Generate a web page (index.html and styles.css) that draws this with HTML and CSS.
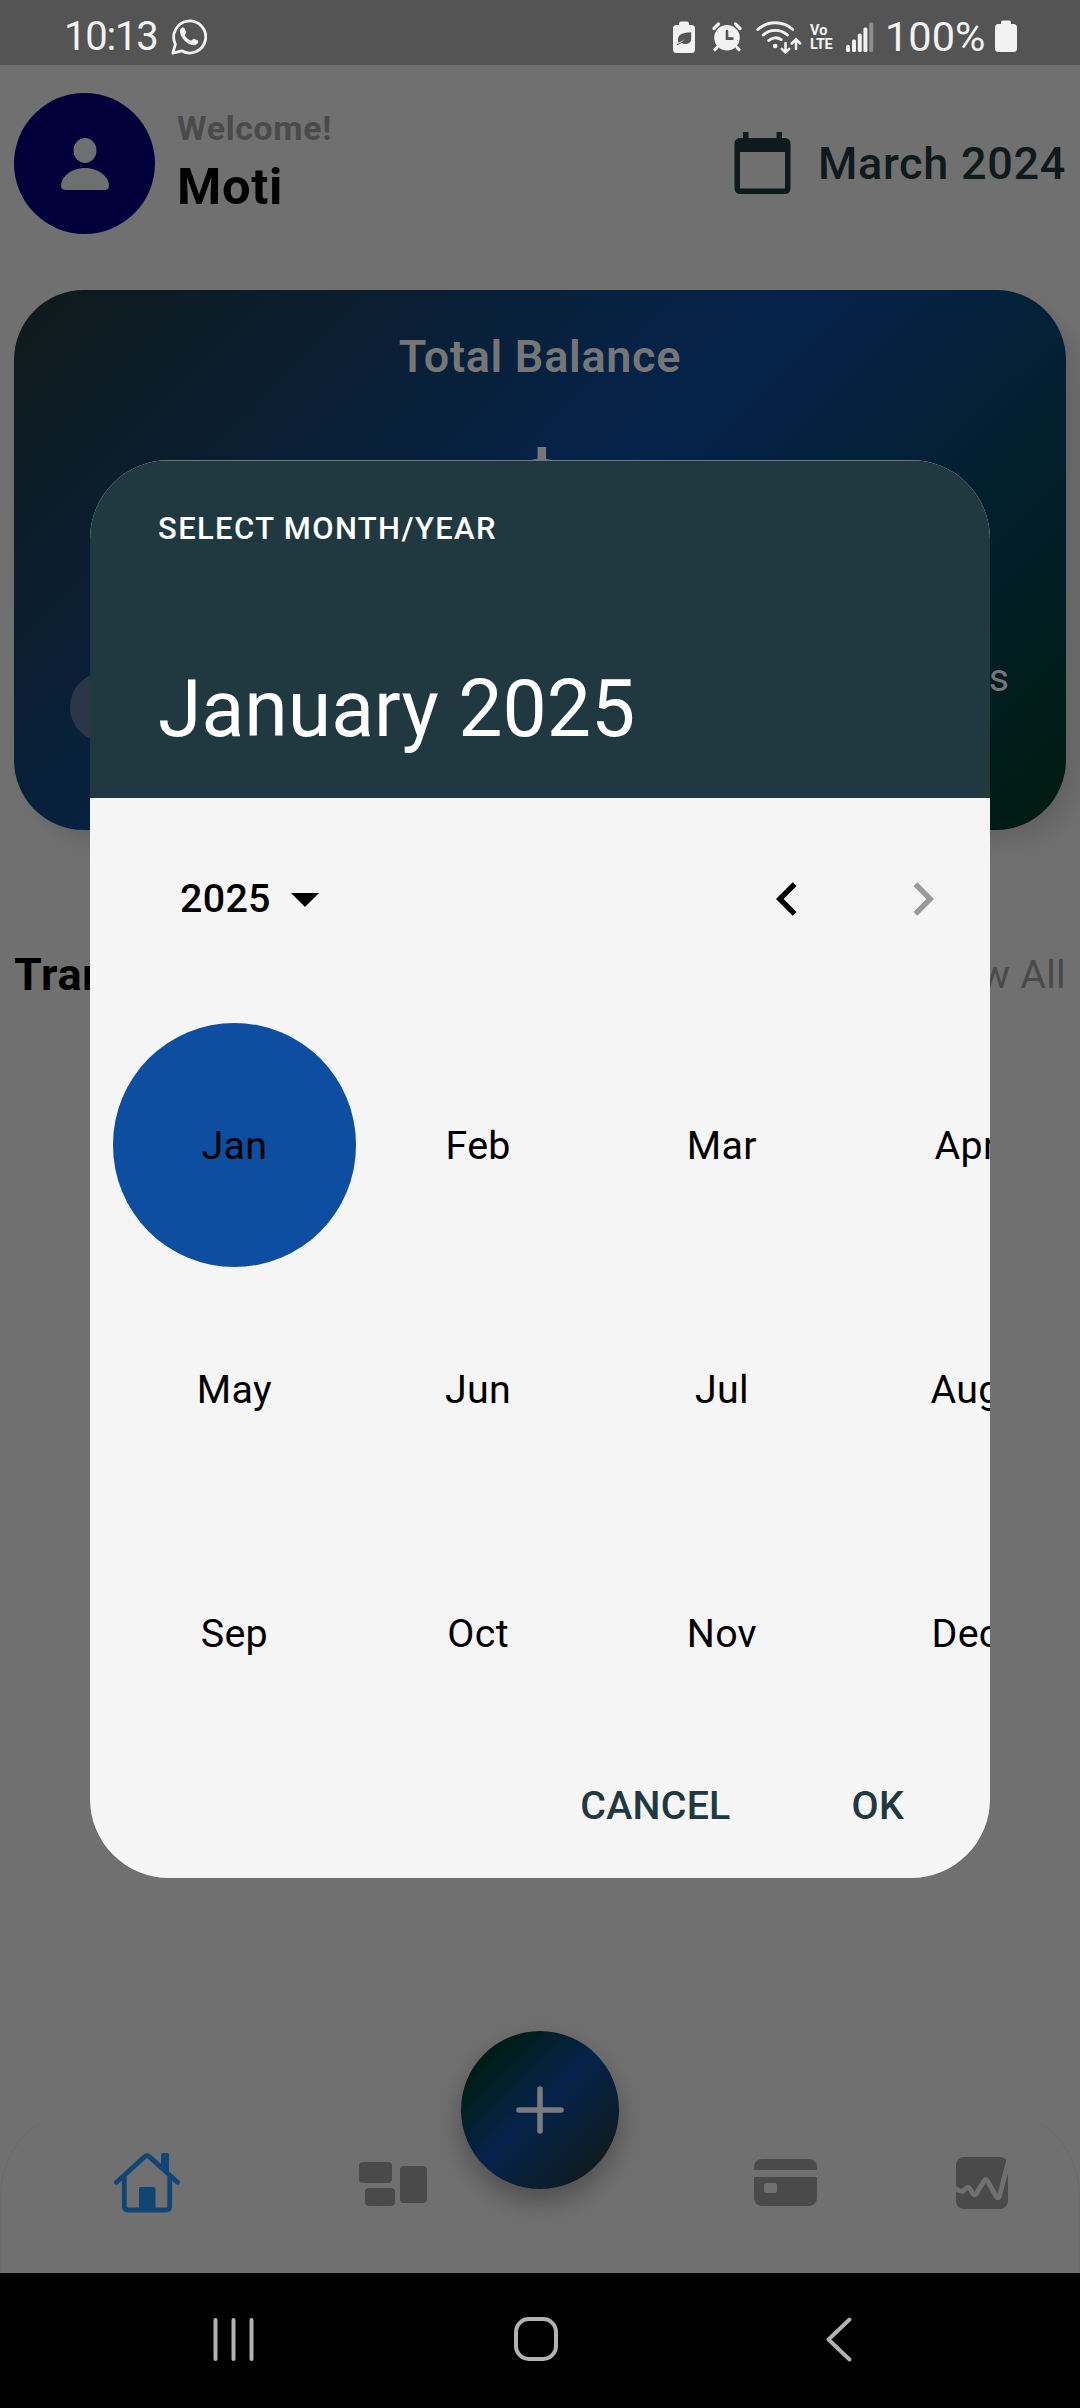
FILE: index.html
```html
<!DOCTYPE html>
<html lang="en">
<head>
<meta charset="utf-8">
<title>Select month</title>
<link rel="stylesheet" href="styles.css">
</head>
<body>
<div class="screen">
  <div class="status">
    <div class="status-left">
      <span class="clock">10:13</span>
      <svg width="36" height="37" viewBox="0 0 36 37" fill="none" stroke="#f2f2f2" stroke-width="2.8"><path d="M1.800 35.200 4.400 26.200A16 16 0 1 1 10.600 32.800Z" stroke-linejoin="round"/><path d="M9.200 11.500C10.600 9 13 9 13.600 10.400L15.200 14C15.400 15 13.600 16.400 13.800 17.200C15 19.600 17.400 21.800 19.800 22.600C20.800 22.800 22 20.600 23 20.800L26.800 22.600C28.200 23.600 26.600 27 23.400 27.200C16.400 27.600 7.800 18.600 9.200 11.500Z" fill="#f2f2f2" stroke="none"/></svg>
    </div>
    <div class="status-right">
      <svg class="i-eco" width="22" height="32" viewBox="0 0 22 32"><path d="M8 .6h6a2 2 0 0 1 2 2V4h2.500a3.500 3.500 0 0 1 3.500 3.500v21a3.500 3.500 0 0 1-3.500 3.500h-15A3.500 3.500 0 0 1 0 28.500v-21A3.500 3.500 0 0 1 3.500 4H6V2.600a2 2 0 0 1 2-2Z" fill="#f2f2f2"/><path d="M18.200 11.300V18c0 4.500-5.500 6.500-9.600 4L4 24.200v-1.200c3.600-.8 6.200-2.400 8-5.400-2.400 2.500-4.400 3.600-6.600 4.100C3.400 14.800 8 11.300 18.200 11.300Z" fill="#545454"/></svg>
      <svg class="i-alarm" width="30" height="30" viewBox="0 0 30 30"><path d="M2 6.500 6.500 2M23.500 2 28 6.500M5 25.500 3 27.600M25 25.500l2 2.100" stroke="#f2f2f2" stroke-width="3.200" stroke-linecap="round"/><circle cx="15" cy="15.800" r="12.800" fill="#f2f2f2"/><path d="M15 9v7.600h5.500" fill="none" stroke="#545454" stroke-width="2.600" stroke-linecap="round"/></svg>
      <svg class="i-wifi" width="46" height="34" viewBox="0 0 46 34" fill="none" stroke="#f2f2f2" stroke-width="2.900" stroke-linecap="round"><path d="M1.800 9.500a26 26 0 0 1 35 0M7.200 15a18 18 0 0 1 24.200 0M12.700 20.500a9.800 9.800 0 0 1 12.500-.8"/><circle cx="19.200" cy="26" r="2.300" fill="#f2f2f2" stroke="none"/><path d="M29.500 23v9M25.800 28.800l3.700 3.700 3.700-3.700M40 29V19.500M35.800 23.500l4.200-4.200 4.200 4.200" stroke-width="2.500"/></svg>
      <span class="volte"><span>Vo</span><span>LTE</span></span>
      <svg class="i-signal" width="28" height="30" viewBox="0 0 28 30" fill="#f2f2f2"><rect x="0" y="23" width="4" height="7" rx="1.500"/><rect x="6" y="17.500" width="4" height="12.500" rx="1.500"/><rect x="11.800" y="11.500" width="4" height="18.500" rx="1.500"/><rect x="17.400" y="5.500" width="4" height="24.500" rx="1.500"/><rect x="23.200" y=".5" width="4" height="29.500" rx="1.500" fill="#8e8e8e"/></svg>
      <span class="percent">100%</span>
      <svg class="i-batt" width="22" height="32" viewBox="0 0 22 32"><path d="M8 .6h6a2 2 0 0 1 2 2V4h2.500a3.500 3.500 0 0 1 3.500 3.500v21a3.500 3.500 0 0 1-3.500 3.500h-15A3.500 3.500 0 0 1 0 28.500v-21A3.500 3.500 0 0 1 3.500 4H6V2.600a2 2 0 0 1 2-2Z" fill="#f2f2f2"/></svg>
    </div>
  </div>

  <div class="home">
    <div class="header">
      <div class="avatar">
        <svg width="48" height="52" viewBox="0 0 48 52" fill="#6d6f70"><ellipse cx="24" cy="12.500" rx="11.500" ry="12.500"/><path d="M24 30C39 30 48 40 48 47.500Q48 52 43 52H5Q0 52 0 47.500C0 40 9 30 24 30Z"/></svg>
      </div>
      <div class="who">
        <span class="welcome">Welcome!</span>
        <span class="name">Moti</span>
      </div>
      <div class="month">
        <svg width="57" height="63" viewBox="0 0 57 63" fill="#0f1a1d"><path fill-rule="evenodd" d="M9 0h5.500v6h28V0H48v6h3a5.500 5.500 0 0 1 5.500 5.500v45A5.500 5.500 0 0 1 51 62H6a5.500 5.500 0 0 1-5.500-5.500v-45A5.500 5.500 0 0 1 6 6h3ZM6 20v36.500h45V20Z"/></svg>
        <span>March 2024</span>
      </div>
    </div>

    <div class="card">
      <div class="card-title">Total Balance</div>
      <div class="amount">$</div>
      <div class="flows">
        <span class="dot"></span>
        <span class="expenses">Expenses</span>
      </div>
    </div>

    <div class="list-head">
      <span class="list-title">Transactions</span>
      <span class="view-all">View All</span>
    </div>
  </div>

  <div class="tabs">
    <svg class="t1" width="66" height="60" viewBox="0 0 66 60" fill="none" stroke="#114674" stroke-width="4.800" stroke-linecap="round" stroke-linejoin="round"><path d="M2.500 29.300 31 3.400q2-1.600 4 0L63.500 29.300M10.300 23v30.300q0 3.700 3.700 3.700h38q3.700 0 3.700-3.700V23"/><path d="M47 1.500q0-1.500 1.500-1.500h5q1.500 0 1.500 1.500V21l-8-7.500ZM25 59V35.500q0-1.500 1.500-1.500h13.500q1.500 0 1.500 1.500V59Z" fill="#114674" stroke="none"/></svg>
    <svg class="t2" width="68" height="44" viewBox="0 0 68 44" fill="#4a4a4a"><rect width="33" height="21" rx="4"/><rect x="6" y="26" width="30" height="18" rx="4"/><rect x="41" y="4" width="27" height="37" rx="4"/></svg>
    <svg class="t3" width="63" height="47" viewBox="0 0 63 47" fill="#4a4a4a"><path d="M0 11V8a8 8 0 0 1 8-8h47a8 8 0 0 1 8 8v3ZM0 18h63v21a8 8 0 0 1-8 8H8a8 8 0 0 1-8-8Z"/><rect x="10" y="24" width="13" height="10" rx="2.500" fill="#707070"/></svg>
    <svg class="t4" width="52" height="52" viewBox="0 0 52 52"><rect width="52" height="52" rx="8" fill="#4a4a4a"/><path d="M-2 30.800Q5 35 7 34Q8 33.500 9.800 31.500Q12 29.400 13.800 31.500L17 36.800Q18.700 39 20.300 36.800L28 24Q29.800 21.500 31.500 24L40.500 40Q42.500 42 43.500 39L53.500 0" fill="none" stroke="#707070" stroke-width="4.800" stroke-linejoin="round"/><path d="M50 3 52 -1 54 -1V16H51Z" fill="#707070"/></svg>
  </div>

  <div class="sysnav">
    <svg class="s1" width="41" height="43" viewBox="0 0 41 43" stroke="#b2b2b2" stroke-width="4" stroke-linecap="round"><path d="M2.500 2v39M20.500 2v39M38.500 2v39"/></svg>
    <svg class="s2" width="44" height="44" viewBox="0 0 44 44"><rect x="2" y="2" width="40" height="40" rx="13" fill="none" stroke="#b2b2b2" stroke-width="4"/></svg>
    <svg class="s3" width="26" height="45" viewBox="0 0 26 45"><path d="M23.500 2.500 2.500 22.500l21 20" fill="none" stroke="#b2b2b2" stroke-width="3.800" stroke-linecap="round" stroke-linejoin="round"/></svg>
  </div>

  <div class="fab">
    <svg width="48" height="48" viewBox="0 0 48 48" stroke="#7b7b7b" stroke-width="5.600" stroke-linecap="round"><path d="M24 3v42M3 24h42"/></svg>
  </div>

  <div class="dialog">
    <div class="dialog-head">
      <span class="hint">SELECT MONTH/YEAR</span>
      <span class="picked">January 2025</span>
    </div>
    <div class="pager">
      <span class="year">2025</span>
      <svg class="caret" width="28" height="14" viewBox="0 0 28 14"><path d="M0 0h28L14 14Z"/></svg>
      <svg class="prev" width="21" height="34" viewBox="0 0 21 34"><path d="M18.600 2.200 3.800 17l14.800 14.800" fill="none" stroke="#000" stroke-width="5.400"/></svg>
      <svg class="next" width="21" height="34" viewBox="0 0 21 34"><path d="M2.400 2.200 17.200 17 2.400 31.800" fill="none" stroke="#999" stroke-width="5.400"/></svg>
    </div>
    <div class="months">
      <span class="on">Jan</span><span>Feb</span><span>Mar</span><span>Apr</span>
      <span>May</span><span>Jun</span><span>Jul</span><span>Aug</span>
      <span>Sep</span><span>Oct</span><span>Nov</span><span>Dec</span>
    </div>
    <div class="actions"><span>CANCEL</span><span>OK</span></div>
  </div>
</div>
</body>
</html>
```
FILE: styles.css
```css
* { box-sizing: border-box; }
body { margin: 0; }
svg { display: block; flex: none; }
.screen {
  position: relative;
  width: 1080px;
  height: 2408px;
  overflow: hidden;
  display: flex;
  flex-direction: column;
  background: #707070;
  font-family: Roboto, "Liberation Sans", sans-serif;
  white-space: nowrap;
}

.status {
  height: 65px;
  flex: none;
  background: #545454;
  color: #f2f2f2;
  display: flex;
  justify-content: space-between;
  padding: 0 63px 0 64px;
  font-size: 40px;
  line-height: 46px;
}
.status-left, .status-right { display: flex; align-items: flex-start; }
.status-left svg { margin: 18px 0 0 14px; }
.clock { margin-top: 14px; width: 93px; letter-spacing: -1.200px; }
.i-eco { margin-top: 21px; }
.i-alarm { margin: 22px 0 0 17px; }
.i-wifi { margin: 20px 0 0 14px; }
.volte {
  display: flex;
  flex-direction: column;
  margin: 24px 0 0 8px;
  width: 25px;
  font-size: 14.500px;
  line-height: 14px;
  font-weight: 700;
}
.volte span + span { letter-spacing: -.300px; }
.i-signal { margin: 22px 0 0 11px; }
.percent { margin: 14px 0 0 11px; width: 110px; font-size: 41.500px; }
.i-batt { margin-top: 20px; }

.home { flex: 1; padding: 28px 14px 0; }
.header { display: flex; height: 141px; align-items: center; }
.avatar {
  width: 141px;
  height: 141px;
  border-radius: 50%;
  background: #02003a;
  display: flex;
  align-items: center;
  justify-content: center;
}
.who { display: flex; flex-direction: column; margin-left: 22px; padding-bottom: 2px; }
.welcome { font-size: 33.750px; line-height: 48px; font-weight: 700; color: #4a4a4a; letter-spacing: .700px; }
.name { font-size: 50.600px; line-height: 68px; font-weight: 700; color: #000; letter-spacing: .700px; }
.month {
  display: flex;
  align-items: center;
  gap: 27px;
  margin-left: auto;
  color: #0f1a1d;
  font-size: 45px;
  line-height: 54px;
  font-weight: 500;
  letter-spacing: .700px;
}

.card {
  height: 540px;
  margin-top: 56px;
  border-radius: 70px;
  background: linear-gradient(135deg, #0f1a1a, #05234b 50%, #001b0e);
  box-shadow: 14px 14px 28px -8px rgba(0, 0, 0, .16);
  color: #767676;
  display: flex;
  flex-direction: column;
  align-items: center;
}
.card-title { margin-top: 40px; font-size: 45px; line-height: 54px; font-weight: 600; letter-spacing: .700px; }
.amount { margin-top: 51px; font-size: 112px; line-height: 132px; font-weight: 700; }
.flows { align-self: stretch; display: flex; justify-content: space-between; padding: 88px 57px 0 56px; }
.dot { width: 70px; height: 70px; border-radius: 50%; background: #2b3748; margin-top: 17px; }
.expenses { font-size: 39.400px; line-height: 46px; }

.list-head { display: flex; justify-content: space-between; align-items: center; margin-top: 117px; height: 54px; }
.list-title { font-size: 45px; font-weight: 700; letter-spacing: .700px; }
.view-all { font-size: 39.400px; color: #4a4a4a; letter-spacing: .300px; }

.tabs {
  flex: none;
  height: 158px;
  display: flex;
  align-items: flex-start;
  padding: 38px 0 0 113px;
  border: 1px solid #696969;
  border-width: 0 1px;
  border-radius: 70px 70px 0 0 / 84px 84px 0 0;
}
.t2 { margin: 9px 0 0 179px; }
.t3 { margin: 6px 0 0 327px; }
.t4 { margin: 4px 0 0 139px; }

.sysnav { flex: none; height: 135px; background: #000; display: flex; align-items: center; padding: 0 0 3px 213px; }
.s2 { margin-left: 260px; }
.s3 { margin-left: 268px; }

.fab {
  position: absolute;
  left: 461px;
  top: 2031px;
  width: 158px;
  height: 158px;
  border-radius: 50%;
  background: linear-gradient(135deg, #001b0e 12%, #05234b 49%, #0f1a1d 88%);
  box-shadow: 0 12px 26px rgba(0, 0, 0, .3);
  display: flex;
  align-items: center;
  justify-content: center;
}

.dialog {
  position: absolute;
  left: 90px;
  top: 460px;
  width: 900px;
  height: 1418px;
  border-radius: 79px;
  overflow: hidden;
  background: #f5f5f5;
  display: flex;
  flex-direction: column;
  color: #000;
}
.dialog-head {
  height: 338px;
  border-top: 1px solid #687579;
  background: #203840;
  color: #fff;
  display: flex;
  flex-direction: column;
  padding: 50px 68px 0;
}
.hint { font-size: 30.940px; line-height: 36px; font-weight: 500; letter-spacing: 1.400px; }
.picked { margin-top: 116px; font-size: 78.750px; line-height: 92px; }
.pager { display: flex; align-items: center; height: 46px; margin-top: 78px; padding-left: 90px; }
.year { font-size: 39.400px; line-height: 46px; font-weight: 500; width: 91px; letter-spacing: .300px; }
.caret { margin: 2px 0 0 20px; }
.prev { margin-left: 457px; }
.next { margin-left: 116px; }
.months {
  display: grid;
  grid-template-columns: repeat(4, 243.750px);
  grid-auto-rows: 243.750px;
  margin: 101px 0 0 22.500px;
  font-size: 39.400px;
}
.months span { display: flex; align-items: center; justify-content: center; padding-top: 2px; letter-spacing: .300px; }
.months .on { background: #0d4ea1; border-radius: 50%; }
.actions {
  display: flex;
  justify-content: flex-end;
  gap: 121px;
  padding: 0 86px 0 0;
  margin-top: 29px;
  font-size: 39.400px;
  line-height: 46px;
  font-weight: 500;
  color: #203840;
  letter-spacing: .200px;
}
```
